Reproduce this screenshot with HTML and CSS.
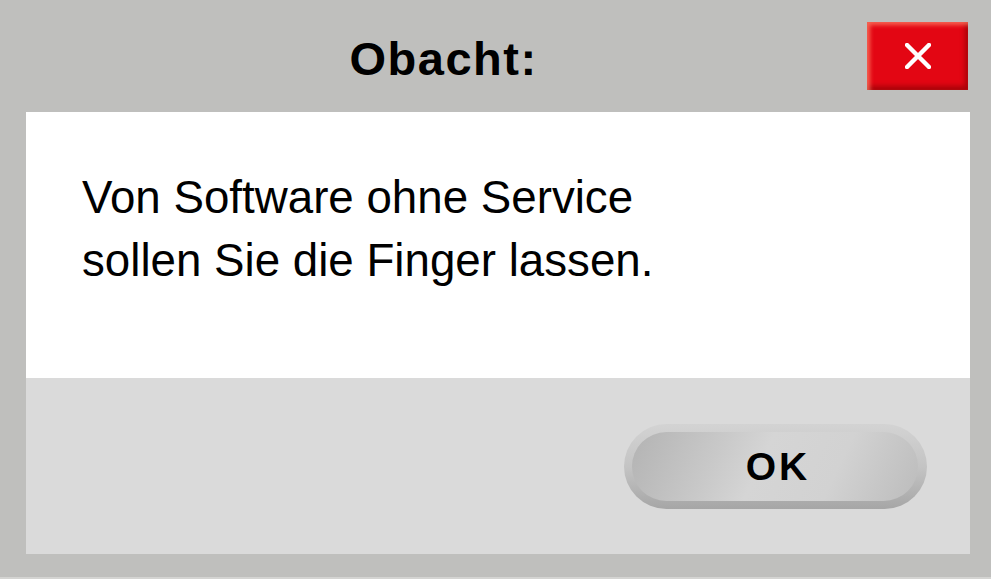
FILE: index.html
```html
<!DOCTYPE html>
<html lang="de">
<head>
<meta charset="utf-8">
<title>Obacht</title>
<link rel="stylesheet" href="styles.css">
</head>
<body>
<div class="window">
  <div class="titlebar">
    <div class="title">Obacht:</div>
    <button class="close" aria-label="Schließen">
      <svg width="26" height="26" viewBox="0 0 26 26"><path d="M2 2 L24 24 M24 2 L2 24" stroke="#fff" stroke-width="4.4" stroke-linecap="square"/></svg>
    </button>
  </div>
  <div class="content">
    <p class="message">Von Software ohne Service<br>sollen Sie die Finger lassen.</p>
  </div>
  <div class="footer">
    <button class="ok"><span class="ok-face">OK</span></button>
  </div>
</div>
</body>
</html>
```
FILE: styles.css
```css
html, body {
  margin: 0;
  padding: 0;
}
body {
  background: #bfbfbd;
  font-family: "Liberation Sans", Arial, Helvetica, sans-serif;
  width: 991px;
  height: 579px;
  overflow: hidden;
}
.window {
  box-sizing: border-box;
  height: 579px;
  padding: 0 21px 23px 26px;
  border-bottom: 2px solid #d4d4d2;
  display: flex;
  flex-direction: column;
}
.titlebar {
  height: 112px;
  display: flex;
  align-items: center;
  padding-right: 2px;
}
.title {
  flex: 1;
  text-align: center;
  font-weight: bold;
  font-size: 47px;
  letter-spacing: 1.5px;
  color: #000;
  padding-top: 5px;
  padding-right: 6px;
}
.close {
  width: 101px;
  height: 68px;
  border: none;
  padding: 0;
  margin: 0;
  display: flex;
  align-items: center;
  justify-content: center;
  background: #e30613;
  box-shadow: inset 3px 3px 4px rgba(255, 140, 110, 0.7), inset -3px -4px 5px rgba(120, 0, 0, 0.55);
}
.content {
  background: #ffffff;
  height: 266px;
  box-sizing: border-box;
  padding: 54px 0 0 56px;
}
.message {
  margin: 0;
  font-size: 45.7px;
  line-height: 63px;
  color: #000;
}
.footer {
  background: #dadada;
  height: 176px;
  box-sizing: border-box;
  padding: 46px 43px 0 0;
  display: flex;
  justify-content: flex-end;
  align-items: flex-start;
}
.ok {
  width: 303px;
  height: 85px;
  border: none;
  margin: 0;
  padding: 8px 9px 8px 8px;
  border-radius: 43px;
  background: linear-gradient(to bottom, #d3d3d3 0%, #c4c4c4 50%, #a6a6a6 100%);
  display: flex;
}
.ok-face {
  flex: 1;
  border-radius: 36px;
  background: linear-gradient(115deg, #b3b3b3 0%, #c9c9c9 30%, #d5d5d5 45%, #d2d2d2 70%, #bcbcbc 100%);
  display: flex;
  align-items: center;
  justify-content: center;
  font-family: "Liberation Sans", Arial, sans-serif;
  font-weight: bold;
  font-size: 39px;
  letter-spacing: 3px;
  color: #000;
  padding-left: 6px;
}
```
